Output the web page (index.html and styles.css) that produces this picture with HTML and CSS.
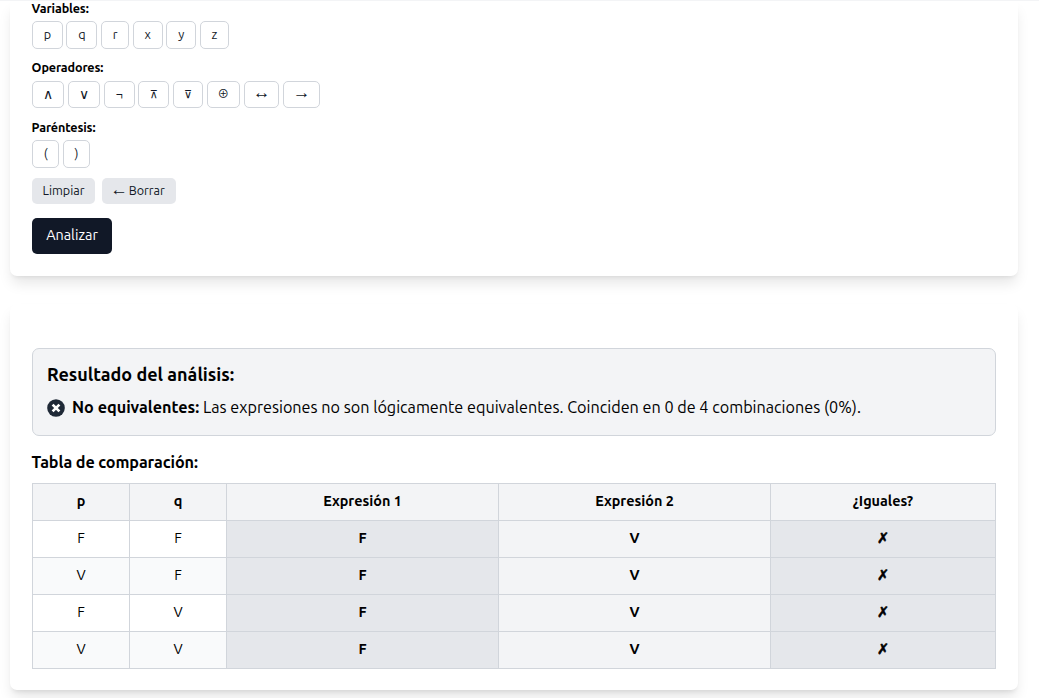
FILE: index.html
```html
<!DOCTYPE html>
<html lang="es">
<head>
<meta charset="utf-8">
<title>Equivalencias lógicas</title>
<link rel="stylesheet" href="styles.css">
</head>
<body>
<main class="page">
  <section class="card editor">
    <div class="group">
      <h3 class="label">Variables:</h3>
      <div class="keys">
        <button class="key w30-8">p</button><button class="key w31">q</button><button class="key w28">r</button><button class="key w30">x</button><button class="key w30">y</button><button class="key w29">z</button>
      </div>
    </div>
    <div class="group">
      <h3 class="label label-operators">Operadores:</h3>
      <div class="keys">
        <button class="key w32 logic">∧</button><button class="key w32 logic">∨</button><button class="key w31">¬</button><button class="key w31 barred">⊼</button><button class="key w30 barred">⊽</button><button class="key w33 xor">⊕</button><button class="key w36 wide-arrow">↔</button><button class="key w37 wide-arrow">→</button>
      </div>
    </div>
    <div class="group">
      <h3 class="label">Paréntesis:</h3>
      <div class="keys">
        <button class="key w27">(</button><button class="key w27">)</button>
      </div>
    </div>
    <div class="actions">
      <button class="action clear">Limpiar</button>
      <button class="action erase"><span class="wide-arrow">←</span><span>Borrar</span></button>
    </div>
    <button class="analyze">Analizar</button>
  </section>
  <section class="card results">
    <div class="summary">
      <h2 class="summary-title">Resultado del análisis:</h2>
      <p class="verdict">
        <svg class="icon" viewBox="0 0 18 18"><circle cx="9" cy="9" r="8.8" fill="#1f2937"/><path d="M5.6 5.6l6.8 6.8M12.4 5.6l-6.8 6.8" stroke="#fff" stroke-width="2.7"/></svg>
        <strong class="verdict-name">No equivalentes:</strong>
        <span class="verdict-text">Las expresiones no son lógicamente equivalentes. Coinciden en 0 de 4 combinaciones (0%).</span>
      </p>
    </div>
    <h3 class="table-title">Tabla de comparación:</h3>
    <table class="truth">
      <colgroup><col class="c-var"><col class="c-var"><col class="c-exp"><col class="c-exp"><col></colgroup>
      <thead><tr><th>p</th><th>q</th><th>Expresión 1</th><th>Expresión 2</th><th>¿Iguales?</th></tr></thead>
      <tbody>
        <tr><td>F</td><td>F</td><td class="one">F</td><td class="two">V</td><td class="same">✗</td></tr>
        <tr><td>V</td><td>F</td><td class="one">F</td><td class="two">V</td><td class="same">✗</td></tr>
        <tr><td>F</td><td>V</td><td class="one">F</td><td class="two">V</td><td class="same">✗</td></tr>
        <tr><td>V</td><td>V</td><td class="one">F</td><td class="two">V</td><td class="same">✗</td></tr>
      </tbody>
    </table>
  </section>
</main>
</body>
</html>
```
FILE: styles.css
```css
* { box-sizing: border-box; margin: 0; padding: 0; }
body {
  height: 698px;
  overflow: hidden;
  background: #fff;
  border-top: 1px solid #f3f4f6;
  color: #000;
  font-family: Ubuntu, "Noto Sans", "DejaVu Sans", sans-serif;
}
button { font-family: inherit; color: #111827; border: 0; }
.page { width: 1008px; margin-left: 10px; display: flex; flex-direction: column; gap: 28px; }
.card {
  background: #fff;
  padding: 0 22px;
  box-shadow: 0 9px 13.5px -2.7px rgba(0, 0, 0, .1), 0 3.6px 5.4px -3.6px rgba(0, 0, 0, .1);
}
.editor { height: 275px; border-radius: 0 0 7px 7px; }
.group { height: 59.6px; }
.label { height: 20px; margin-left: -.4px; font-size: 12.6px; line-height: 14.4px; font-weight: 600; letter-spacing: -.14px; }
.label-operators { line-height: 13px; }
.keys { display: flex; gap: 3.6px; }
.key {
  height: 27.5px;
  border: 1px solid #d1d5db;
  border-radius: 5px;
  background: #fff;
  font-size: 12.6px;
  line-height: 25px;
}
.w27 { width: 27.3px; } .w28 { width: 28.2px; } .w29 { width: 29px; } .w30 { width: 30px; }
.w30-8 { width: 30.8px; } .w31 { width: 31px; } .w32 { width: 32.3px; } .w33 { width: 33.5px; } .w36 { width: 35.7px; } .w37 { width: 37px; }
.logic { font-family: "DejaVu Sans", sans-serif; font-size: 14px; }
.barred { font-family: "DejaVu Sans", sans-serif; font-size: 11px; }
.xor { font-family: "Noto Sans CJK JP", "DejaVu Sans", sans-serif; font-size: 11.5px; line-height: 23px; padding-bottom: 2px; }
.wide-arrow { font-family: "Liberation Sans", sans-serif; font-size: 17.5px; }
.key.wide-arrow { line-height: 21px; padding-bottom: 4px; }
.actions { display: flex; gap: 7px; margin-top: -2px; }
.action { height: 26px; border-radius: 5px; background: #e5e7eb; font-size: 12.6px; line-height: 25px; }
.clear { width: 63px; }
.erase { width: 74px; display: flex; justify-content: center; }
.erase .wide-arrow { width: 18.5px; margin-left: -3px; line-height: 22px; text-align: left; }
.analyze {
  display: block;
  width: 80px;
  height: 36px;
  margin-top: 14px;
  border-radius: 5px;
  background: #111827;
  color: #fff;
  font-size: 14.4px;
  line-height: 34px;
  padding-bottom: 2px;
}
.results { height: 386px; border-radius: 7px; padding-top: 44px; }
.summary { width: 964px; height: 88px; border: 1px solid #d1d5db; border-radius: 7px; background: #f3f4f6; padding: 13px 14px; }
.summary-title { height: 33px; font-size: 18px; line-height: 25px; font-weight: 600; white-space: nowrap; }
.verdict { display: flex; align-items: center; height: 24px; font-size: 16.2px; line-height: 24px; white-space: nowrap; color: #000; }
.icon { width: 18px; height: 18px; margin: 1px 7px 0 0; flex: none; }
.verdict-name { width: 131px; font-weight: 600; }
.table-title { margin: 14px 0 0 -.4px; height: 33px; font-size: 16.2px; line-height: 24px; font-weight: 600; letter-spacing: -.11px; }
.truth { width: 964px; border-collapse: collapse; table-layout: fixed; font-size: 14.4px; text-align: center; }
.c-var { width: 97px; } .c-exp { width: 272px; }
.truth th, .truth td { height: 37px; border: 1px solid #d1d5db; line-height: 20px; padding-bottom: 2px; }
.truth th { background: #f3f4f6; font-weight: 600; }
.truth tbody tr:nth-child(even) { background: #f9fafb; }
.truth .one, .truth .same { background: #e5e7eb; font-weight: 600; }
.truth .same { -webkit-text-stroke: .6px #000; }
.truth .two { background: #f3f4f6; font-weight: 600; }
```
